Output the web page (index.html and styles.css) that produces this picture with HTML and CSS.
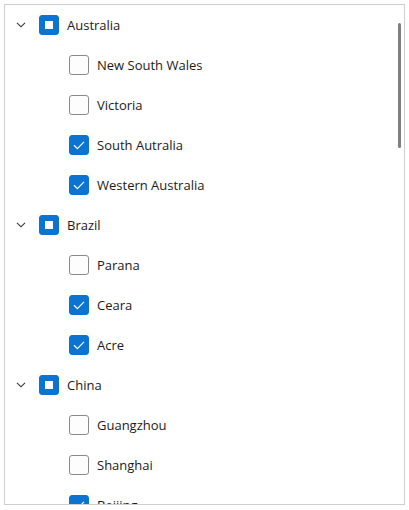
FILE: index.html
```html
<!DOCTYPE html>
<html>
<head>
<meta charset="utf-8">
<link rel="stylesheet" href="styles.css">
</head>
<body>
<div class="tree">
  <div class="scrollbar"></div>
  <div class="row parent">
    <svg class="chev" width="10" height="6" viewBox="0 0 10 6"><path d="M1 0.8 L5 4.8 L9 0.8" fill="none" stroke="#333" stroke-width="1.1"/></svg>
    <span class="cb ind"><span class="sq"></span></span><span class="label">Australia</span>
  </div>
  <div class="row child"><span class="cb"></span><span class="label">New South Wales</span></div>
  <div class="row child"><span class="cb"></span><span class="label">Victoria</span></div>
  <div class="row child"><span class="cb on"><svg width="14" height="14" viewBox="0 0 14 14"><path d="M2 7.3 L5.4 10.6 L12 3.9" fill="none" stroke="#fff" stroke-width="1.2"/></svg></span><span class="label">South Autralia</span></div>
  <div class="row child"><span class="cb on"><svg width="14" height="14" viewBox="0 0 14 14"><path d="M2 7.3 L5.4 10.6 L12 3.9" fill="none" stroke="#fff" stroke-width="1.2"/></svg></span><span class="label">Western Australia</span></div>
  <div class="row parent">
    <svg class="chev" width="10" height="6" viewBox="0 0 10 6"><path d="M1 0.8 L5 4.8 L9 0.8" fill="none" stroke="#333" stroke-width="1.1"/></svg>
    <span class="cb ind"><span class="sq"></span></span><span class="label">Brazil</span>
  </div>
  <div class="row child"><span class="cb"></span><span class="label">Parana</span></div>
  <div class="row child"><span class="cb on"><svg width="14" height="14" viewBox="0 0 14 14"><path d="M2 7.3 L5.4 10.6 L12 3.9" fill="none" stroke="#fff" stroke-width="1.2"/></svg></span><span class="label">Ceara</span></div>
  <div class="row child"><span class="cb on"><svg width="14" height="14" viewBox="0 0 14 14"><path d="M2 7.3 L5.4 10.6 L12 3.9" fill="none" stroke="#fff" stroke-width="1.2"/></svg></span><span class="label">Acre</span></div>
  <div class="row parent">
    <svg class="chev" width="10" height="6" viewBox="0 0 10 6"><path d="M1 0.8 L5 4.8 L9 0.8" fill="none" stroke="#333" stroke-width="1.1"/></svg>
    <span class="cb ind"><span class="sq"></span></span><span class="label">China</span>
  </div>
  <div class="row child"><span class="cb"></span><span class="label">Guangzhou</span></div>
  <div class="row child"><span class="cb"></span><span class="label">Shanghai</span></div>
  <div class="row child"><span class="cb on"><svg width="14" height="14" viewBox="0 0 14 14"><path d="M2 7.3 L5.4 10.6 L12 3.9" fill="none" stroke="#fff" stroke-width="1.2"/></svg></span><span class="label">Beijing</span></div>
</div>
</body>
</html>
```
FILE: styles.css
```css
html, body { margin: 0; padding: 0; background: #fff; }
body { padding: 4px; }
.tree {
  position: relative;
  width: 399px;
  height: 499px;
  border: 1px solid #cfcfcf;
  overflow: hidden;
  font-family: "Open Sans", "Noto Sans", sans-serif;
  font-size: 13px;
  color: #1a1a1a;
}
.row {
  height: 40px;
  display: flex;
  align-items: center;
}
.parent { padding-left: 11px; }
.chev { width: 10px; height: 6px; margin-right: 13px; }
.child { padding-left: 64px; }
.cb {
  box-sizing: border-box;
  width: 20px;
  height: 20px;
  border: 1px solid #8a8a8a;
  border-radius: 3px;
  background: #fdfdfd;
  margin-right: 8px;
  display: flex;
  align-items: center;
  justify-content: center;
  flex: none;
}
.cb.on, .cb.ind {
  background: #0a74d0;
  border-color: #0a74d0;
}
.sq { width: 8px; height: 8px; background: #fff; }
.label { line-height: 20px; }
.scrollbar {
  position: absolute;
  right: 3px;
  top: 18px;
  width: 3px;
  height: 125px;
  border-radius: 2px;
  background: #7f7f7f;
}
```
